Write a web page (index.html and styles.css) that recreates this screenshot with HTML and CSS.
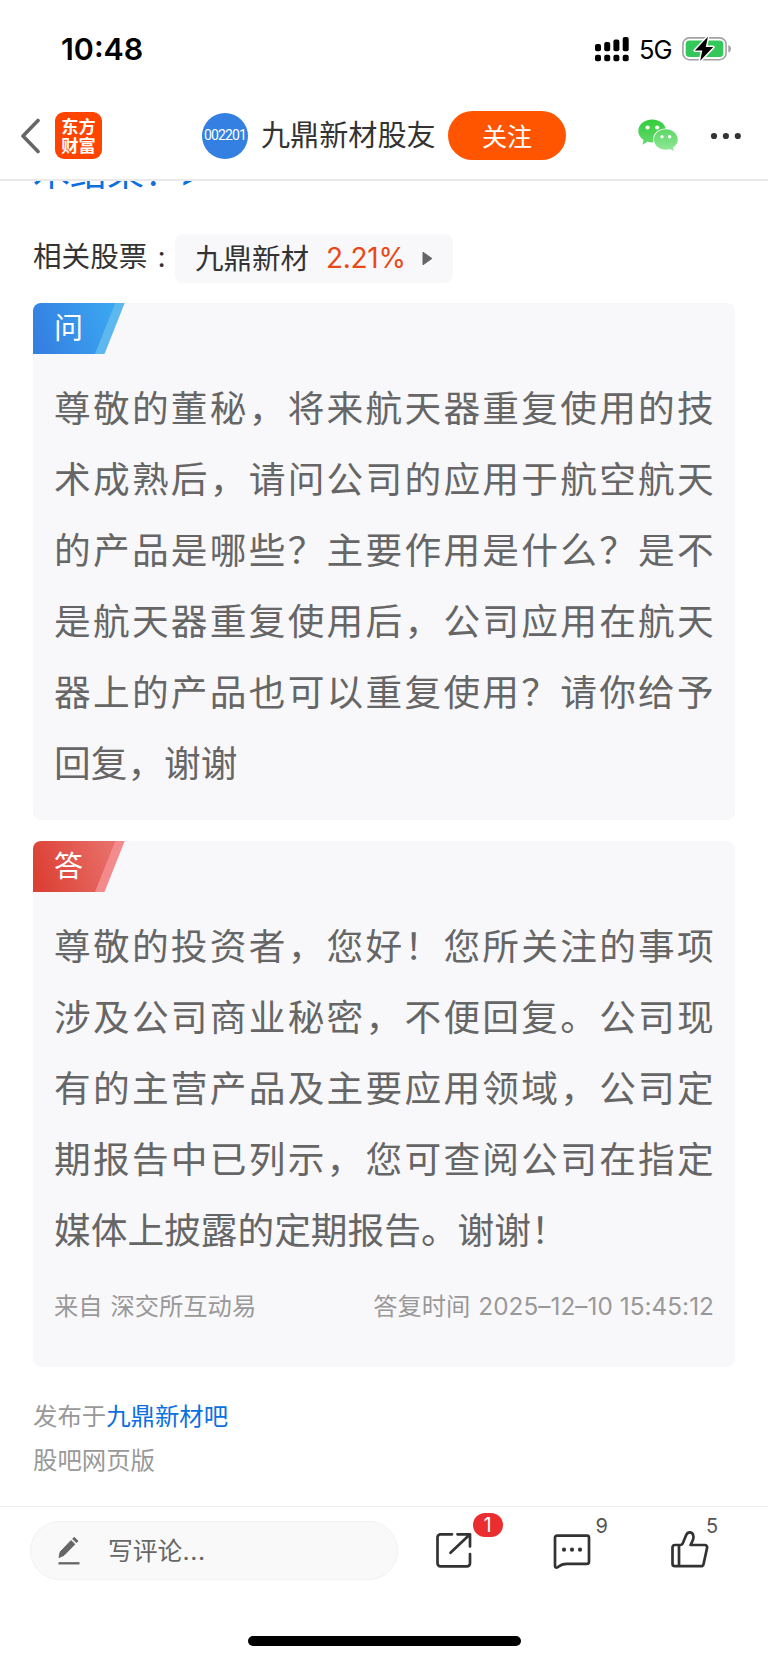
FILE: index.html
```html
<!DOCTYPE html>
<html lang="zh-CN">
<head>
<meta charset="utf-8">
<title>九鼎新材股友</title>
<link rel="stylesheet" href="styles.css">
</head>
<body>
<div class="screen">
  <div class="status">
    <div class="clock">10:48</div>
    <div class="status-right">
      <svg class="signal" width="34" height="25" viewBox="0 0 34 25">
        <rect x="0" y="7" width="6" height="7.300" rx="2"/><rect x="9.200" y="5" width="6" height="9.300" rx="2"/><rect x="18.400" y="2.600" width="6" height="11.700" rx="2"/><rect x="27.700" y="0" width="6" height="14.300" rx="2"/>
        <rect x="0" y="17.700" width="6" height="6.500" rx="2"/><rect x="9.200" y="17.700" width="6" height="6.500" rx="2"/><rect x="18.400" y="17.700" width="6" height="6.500" rx="2"/><rect x="27.700" y="17.700" width="6" height="6.500" rx="2"/>
      </svg>
      <span class="net">5G</span>
      <svg class="battery" width="50" height="26" viewBox="0 0 50 26">
        <rect x="0.900" y="1.900" width="43.200" height="21.800" rx="6.500" fill="#fff" stroke="#a2a2a4" stroke-width="1.600"/>
        <rect x="3.700" y="4.500" width="37.600" height="16.500" rx="3.800" fill="#34c759"/>
        <path d="M46.300 9v7.600c1.700-.7 2.700-2.100 2.700-3.800s-1-3.100-2.700-3.800z" fill="#a2a2a4"/>
        <path d="M25.900 0.800L12.900 14.500h7.400L18.200 24.800 31.200 11.100h-7.400z" fill="#000" stroke="#fff" stroke-width="3" stroke-linejoin="round" paint-order="stroke"/>
      </svg>
    </div>
  </div>

  <header class="nav">
    <svg class="back" width="20" height="36" viewBox="0 0 20 36"><path d="M18 2.500L3 18 18 33.500" fill="none" stroke="#666" stroke-width="3.600" stroke-linecap="round" stroke-linejoin="round"/></svg>
    <div class="logo"><span>东方</span><span>财富</span></div>
    <div class="avatar">002201</div>
    <div class="name">九鼎新材股友</div>
    <button class="follow">关注</button>
    <svg class="wechat" width="40" height="33" viewBox="0 0 40 33">
      <defs><linearGradient id="wa" x1="0" y1="0" x2="0" y2="1"><stop offset="0" stop-color="#32cd3c"/><stop offset="1" stop-color="#66da6c"/></linearGradient><linearGradient id="wb" x1="0" y1="0" x2="0" y2="1"><stop offset="0" stop-color="#5cd766"/><stop offset="1" stop-color="#92e898"/></linearGradient></defs>
      <path d="M14.200 0.500C6.500.5.300 5.500.300 12c0 3.700 2 6.900 5.300 9L4.400 25.700l5-2.900c1.500.5 3.100.7 4.800.7 7.700 0 13.900-5 13.900-11.500S21.900.5 14.200.5z" fill="url(#wa)"/>
      <path d="M27.800 10.300c-6.600 0-11.900 4.500-11.900 10.200s5.300 10.200 11.900 10.200c1.400 0 2.800-.2 4-.6l4 2-.9-3.500c2.900-1.900 4.800-4.800 4.800-8.100 0-5.700-5.300-10.200-11.900-10.200z" fill="url(#wb)" stroke="#fff" stroke-width="1.800" paint-order="stroke"/>
      <circle cx="9.600" cy="8.500" r="2.100" fill="#fff"/><circle cx="19.200" cy="8.500" r="2.100" fill="#fff"/><circle cx="24" cy="17.800" r="1.700" fill="#fff"/><circle cx="31.700" cy="17.800" r="1.700" fill="#fff"/>
    </svg>
    <svg class="more" width="32" height="8" viewBox="0 0 32 8"><circle cx="4" cy="4" r="3.100"/><circle cx="15.900" cy="4" r="3.100"/><circle cx="27.800" cy="4" r="3.100"/></svg>
  </header>

  <main class="content">
    <div class="clip"><div class="clip-text">木结果！<span class="gt">&gt;</span></div></div>

    <div class="stock-row">
      <span class="stock-label">相关股票<span class="colon">:</span></span>
      <div class="stock">
        <span class="stock-name">九鼎新材</span>
        <span class="stock-pct">2.21%</span>
        <svg width="11" height="15" viewBox="0 0 11 15"><path d="M1 1.200v12.600L9.900 7.500z" fill="#666" stroke="#666" stroke-linejoin="round"/></svg>
      </div>
    </div>

    <section class="card ask">
      <div class="tag"><svg width="92" height="52" viewBox="0 0 92 52"><defs><linearGradient id="ga" x1="0" y1="0.600" x2="1" y2="0.400"><stop offset="0" stop-color="#347fe2"/><stop offset="1" stop-color="#3ba6f0"/></linearGradient></defs><path d="M80 0h11.700L71.500 51H60z" fill="#5db8ef"/><path d="M0 51V8a8 8 0 0 1 8-8h74.300L62 51z" fill="url(#ga)"/></svg><span>问</span></div>
      <div class="text">
        <p>尊敬的董秘，将来航天器重复使用的技</p>
        <p>术成熟后，请问公司的应用于航空航天</p>
        <p>的产品是哪些？主要作用是什么？是不</p>
        <p>是航天器重复使用后，公司应用在航天</p>
        <p>器上的产品也可以重复使用？请你给予</p>
        <p class="last">回复，谢谢</p>
      </div>
    </section>

    <section class="card answer">
      <div class="tag"><svg width="92" height="52" viewBox="0 0 92 52"><defs><linearGradient id="gb" x1="0" y1="0.600" x2="1" y2="0.400"><stop offset="0" stop-color="#dc3f33"/><stop offset="1" stop-color="#e86f69"/></linearGradient></defs><path d="M80 0h11.700L71.500 51H60z" fill="#f38b8c"/><path d="M0 51V8a8 8 0 0 1 8-8h74.300L62 51z" fill="url(#gb)"/></svg><span>答</span></div>
      <div class="text">
        <p>尊敬的投资者，您好！您所关注的事项</p>
        <p>涉及公司商业秘密，不便回复。公司现</p>
        <p>有的主营产品及主要应用领域，公司定</p>
        <p>期报告中已列示，您可查阅公司在指定</p>
        <p class="last">媒体上披露的定期报告。谢谢！</p>
      </div>
      <div class="meta"><span class="src">来自 深交所互动易</span><span class="when">答复时间 <span class="date">2025–12–10 15:45:12</span></span></div>
    </section>

    <div class="posted">
      <div>发布于<a class="bar-link">九鼎新材吧</a></div>
      <div>股吧网页版</div>
    </div>
  </main>

  <footer class="toolbar">
    <div class="comment">
      <svg width="22" height="30" viewBox="0 0 22 30"><path d="M1 21.500l1.200-5.600L13 4.600l3.900 3.700L6 19.300z" fill="#666" stroke="#666" stroke-width="1" stroke-linejoin="round"/><path d="M14.600 2.900l1.600-1.700 3.900 3.700-1.700 1.800z" fill="#666" stroke="#666" stroke-width=".8" stroke-linejoin="round"/><path d="M.500 27.300h21" stroke="#666" stroke-width="2.300"/></svg>
      <span class="hint">写评论<span class="dots">...</span></span>
    </div>
    <div class="action share">
      <svg width="40" height="40" viewBox="0 0 40 40"><path d="M17 3.300H5.500a3 3 0 0 0-3 3v26a3 3 0 0 0 3 3H32a3 3 0 0 0 3-3V23M22.500 3.300H35V15.500M34.500 3.800L15.500 21.800" /></svg>
      <span class="badge">1</span>
    </div>
    <div class="action talk">
      <svg width="40" height="40" viewBox="0 0 40 40"><path d="M5 4.700h30a2 2 0 0 1 2 2v24.100a2 2 0 0 1-2 2H14.500c-4 0-6.200 1.300-8.600 3.200-1.500 1.100-2.900.8-2.900-1.200V6.700a2 2 0 0 1 2-2z"/><g class="bubbles"><circle cx="12" cy="18.700" r="2.100"/><circle cx="20" cy="18.700" r="2.100"/><circle cx="28" cy="18.700" r="2.100"/></g></svg>
      <span class="count">9</span>
    </div>
    <div class="action like">
      <svg width="40" height="40" viewBox="0 0 40 40"><path d="M8.500 15H5a2.500 2.500 0 0 0-2.500 2.500v16.200A2.500 2.500 0 0 0 5 36.200h26a2.500 2.500 0 0 0 2.500-2l3.600-16.400a2.300 2.300 0 0 0-2.300-2.800H20.500c1.700-3.400 3.500-6 2.900-9C22.700 1.500 18 1.200 16.300 4.800L12.500 13.900c-.5.800-1.200 1.100-2 1.100H8.500zM9 15v21.200"/></svg>
      <span class="count">5</span>
    </div>
  </footer>
  <div class="home"></div>
</div>
</body>
</html>
```

FILE: styles.css
```css
* { box-sizing: border-box; }
body { margin: 0; background: #fff; font-family: Inter, "Noto Sans CJK SC", sans-serif; color: #333; }
.screen { width: 768px; height: 1663px; display: flex; flex-direction: column; overflow: hidden; }
p { margin: 0; }

.status { height: 94px; padding: 0 36px 0 61px; display: flex; justify-content: space-between; }
.clock { margin-top: 29px; font-size: 30.400px; line-height: 40px; font-weight: 600; color: #000; }
.status-right { display: flex; align-items: flex-start; }
.signal { margin-top: 37px; }
.net { margin: 35px 0 0 10px; width: 33px; font-size: 25.500px; line-height: 30px; color: #000; letter-spacing: -1px; white-space: nowrap; }
.battery { margin: 36px 0 0 10px; }

.nav { height: 87px; border-bottom: 2px solid #e9e9e9; display: flex; align-items: center; padding: 0 26px 2px 20px; flex: none; }
.logo { margin-left: 15px; width: 47px; height: 47px; border-radius: 9px; background: #ff4400; color: #fff; display: flex; flex-direction: column; justify-content: center; align-items: center; font: 700 17.200px/18px "Noto Sans CJK SC", sans-serif; flex: none; }
.logo span { height: 19px; }
.avatar { margin-left: 100px; width: 46px; height: 46px; border-radius: 50%; background: #3380e2; color: #fff; font: 14px/45px Roboto, sans-serif; letter-spacing: -0.900px; text-align: center; flex: none; }
.name { margin-left: 13px; font-size: 29.100px; line-height: 40px; width: 175px; white-space: nowrap; flex: none; }
.follow { margin-left: 12px; width: 118px; height: 49px; border: 0; border-radius: 25px; padding: 0; background: #ff5500; color: #fff; font: 25px/47px "Noto Sans CJK SC", sans-serif; flex: none; }
.wechat { margin-left: 72px; flex: none; }
.more { margin-left: 32px; fill: #333; flex: none; }

.content { height: 1325px; padding: 0 33px; flex: none; }
.clip { height: 53px; overflow: hidden; }
.clip-text { margin-top: -36px; height: 60px; font-size: 37px; line-height: 56px; color: #0a6fdf; white-space: nowrap; }
.gt { margin-left: -2px; }
.stock-row { height: 49px; display: flex; align-items: center; }
.stock-label { width: 142px; font-size: 28.600px; line-height: 44px; padding-bottom: 4px; white-space: nowrap; }
.colon { margin-left: 10px; }
.stock { width: 278px; height: 49px; border-radius: 8px; background: #f8f8fa; display: flex; align-items: center; padding-left: 20px; white-space: nowrap; }
.stock-name { font-size: 28.500px; width: 131px; padding-bottom: 4px; }
.stock-pct { color: #ea4818; font-size: 28px; width: 96px; letter-spacing: -0.300px; padding-bottom: 1px; }

.card { position: relative; width: 702px; background: #f8f8fb; border-radius: 8px; }
.ask { margin-top: 20px; height: 517px; }
.answer { margin-top: 21px; height: 526px; }
.tag { height: 51px; display: grid; }
.tag svg, .tag span { grid-area: 1 / 1; }
.tag span { padding-left: 21px; font-size: 29px; line-height: 51px; color: #fff; }
.text { padding: 17px 21px 0; color: #666; font-family: "Noto Sans CJK SC", sans-serif; font-size: 36.700px; line-height: 71px; }
.text p { white-space: nowrap; letter-spacing: 2.250px; height: 71px; }
.text .last { letter-spacing: 0; }
.meta { display: flex; justify-content: space-between; padding: 22px 21px 0; font-size: 24.300px; line-height: 40px; color: #999; white-space: nowrap; }
.date { letter-spacing: 0.060px; margin-left: 1px; }
.src { word-spacing: 1px; }
.posted { margin-top: 27px; font-size: 24.400px; line-height: 44px; color: #999; }
.bar-link { color: #0a6fdf; }

.toolbar { height: 120px; border-top: 1px solid #eee; padding-left: 29.500px; display: flex; flex: none; }
.comment { margin-top: 14px; width: 368px; height: 59px; border: 1px solid #f1f1f1; border-radius: 30px; background: #f9f9f9; display: flex; align-items: center; padding-left: 27.500px; color: #666; font-size: 24.800px; flex: none; }
.hint { margin-left: 28px; padding-bottom: 3px; }
.dots { letter-spacing: 0.700px; }
.action { position: relative; width: 40px; height: 40px; margin-top: 23px; flex: none; }
.action svg { fill: none; stroke: #333; stroke-width: 2.700; stroke-linecap: round; stroke-linejoin: round; display: block; }
.action .bubbles { fill: #333; stroke: none; }
.share { margin-left: 37px; padding-top: 1px; }
.talk { margin-left: 77.500px; padding-top: 1px; }
.like { margin-left: 78px; }
.badge { position: absolute; left: 38px; top: -17px; width: 30px; height: 24px; border-radius: 12px; background: #ea2e30; color: #fff; font-size: 20px; line-height: 24px; text-align: center; }
.count { position: absolute; left: 43.500px; top: -16px; font-size: 20px; line-height: 24px; color: #555; }
.like .count { left: 36px; }
.home { width: 273px; height: 10px; border-radius: 5px; background: #000; margin: 10px 0 0 248px; flex: none; }
```
